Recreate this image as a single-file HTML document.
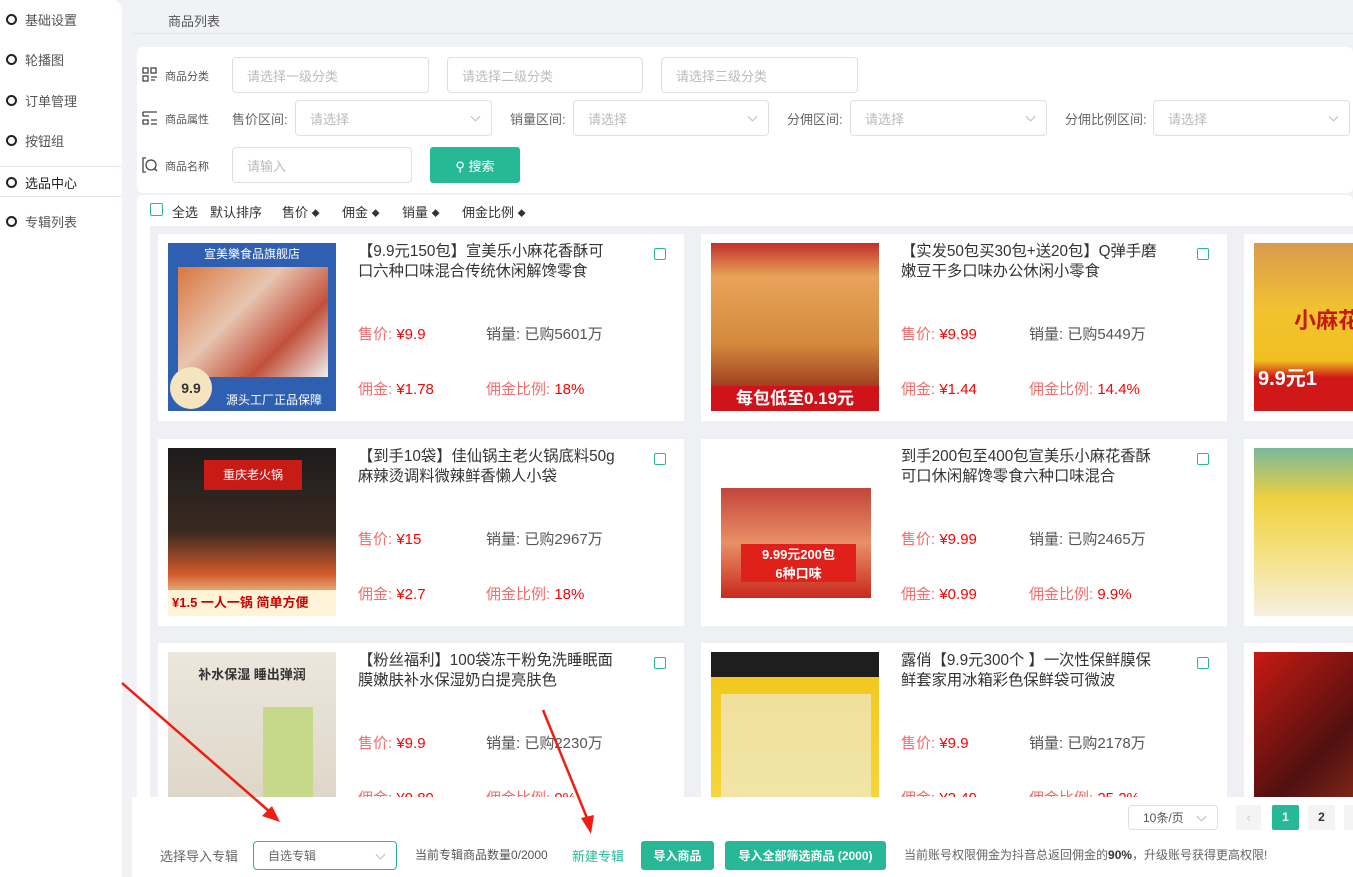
<!DOCTYPE html>
<html><head><meta charset="utf-8"><style>
*{margin:0;padding:0;box-sizing:border-box}
body{width:1353px;height:877px;overflow:hidden;background:#f0f2f5;font-family:"Liberation Sans","Noto Sans CJK SC",sans-serif;font-size:13px;color:#333;position:relative}
.side{position:absolute;left:0;top:0;width:122px;height:877px;background:#fff;border-top-right-radius:10px}
.side div{position:absolute;left:6px;font-size:13px;color:#555;display:flex;align-items:center}
.side div i{width:11px;height:11px;border:2px solid #222;border-radius:50%;margin-right:8px}
.side hr{position:absolute;left:0;width:122px;border:0;border-top:1px solid #e4e6ea}
.abs{position:absolute}
.inp{position:absolute;border:1px solid #dcdfe6;border-radius:4px;background:#fff;color:#bbb;font-size:13px;padding-left:14px;display:flex;align-items:center}
.inp .ch{position:absolute;right:12px;top:50%;width:7px;height:7px;border-right:1px solid #bbb;border-bottom:1px solid #bbb;transform:translateY(-70%) rotate(45deg)}
.lbl{position:absolute;font-size:13px;color:#666}
.card{position:absolute;width:526px;height:187px;background:#fff}
.card .img{position:absolute;left:10px;top:9px;width:168px;height:168px;overflow:hidden}
.card .t{position:absolute;left:200px;top:8px;white-space:nowrap;font-size:15.3px;line-height:20px;color:#333}
.card .cb{position:absolute;left:496px;top:14px;width:12px;height:12px;border:1px solid #27b996;border-radius:2px}
.card .r{position:absolute;font-size:15px;color:#f00}
.card .r span{color:#f56c6c}
.card .g{position:absolute;font-size:15px;color:#555}
.sort{position:absolute;top:202px;font-size:13px;color:#333}
.arr{display:inline-block;font-size:8px;vertical-align:1px}
.btn{position:absolute;background:#27b996;color:#fff;border-radius:3px;font-size:12px;display:flex;align-items:center;justify-content:center;font-weight:bold}
</style></head><body>
<div class="side">
<div style="top:10px"><i></i>基础设置</div>
<div style="top:50px"><i></i>轮播图</div>
<div style="top:91px"><i></i>订单管理</div>
<div style="top:131px"><i></i>按钮组</div>
<hr style="top:166px">
<div style="top:173px;color:#222"><i></i>选品中心</div>
<hr style="top:196px">
<div style="top:212px"><i></i>专辑列表</div>
</div>
<div class="abs" style="left:168px;top:11px;font-size:13px;color:#555">商品列表</div>
<div class="abs" style="left:132px;top:33px;width:1221px;border-top:1px solid #e4e6ea"></div>
<div class="abs" style="left:137px;top:47px;width:1216px;height:146px;background:#fff;border-radius:6px"></div>
<svg class="abs" style="left:142px;top:67px" width="16" height="16" viewBox="0 0 16 16" fill="none" stroke="#444" stroke-width="1.3"><rect x="1" y="1" width="5" height="5"/><rect x="1" y="9" width="5" height="5"/><rect x="9" y="1" width="5" height="5"/><path d="M9 10h6M9 13h4"/></svg>
<div class="lbl" style="left:165px;top:68px;font-size:11px;color:#555">商品分类</div>
<div class="inp" style="left:232px;top:57px;width:197px;height:36px">请选择一级分类</div>
<div class="inp" style="left:447px;top:57px;width:196px;height:36px">请选择二级分类</div>
<div class="inp" style="left:661px;top:57px;width:197px;height:36px">请选择三级分类</div>
<svg class="abs" style="left:142px;top:110px" width="16" height="16" viewBox="0 0 16 16" fill="none" stroke="#444" stroke-width="1.3"><path d="M1 2h14M1 6h6M1 10h5v4H1zM9 10h6M9 14h6M1 2v4"/></svg>
<div class="lbl" style="left:165px;top:111px;font-size:11px;color:#555">商品属性</div>
<div class="lbl" style="left:232px;top:109px">售价区间:</div>
<div class="inp" style="left:295px;top:100px;width:197px;height:36px">请选择<i class="ch"></i></div>
<div class="lbl" style="left:510px;top:109px">销量区间:</div>
<div class="inp" style="left:573px;top:100px;width:196px;height:36px">请选择<i class="ch"></i></div>
<div class="lbl" style="left:787px;top:109px">分佣区间:</div>
<div class="inp" style="left:850px;top:100px;width:197px;height:36px">请选择<i class="ch"></i></div>
<div class="lbl" style="left:1065px;top:109px">分佣比例区间:</div>
<div class="inp" style="left:1153px;top:100px;width:197px;height:36px">请选择<i class="ch"></i></div>
<svg class="abs" style="left:142px;top:157px" width="16" height="16" viewBox="0 0 16 16" fill="none" stroke="#444" stroke-width="1.3"><path d="M4 1H1v14h3"/><circle cx="9" cy="8" r="5"/><path d="M12 11l3 3"/></svg>
<div class="lbl" style="left:165px;top:158px;font-size:11px;color:#555">商品名称</div>
<div class="inp" style="left:232px;top:147px;width:180px;height:36px">请输入</div>
<div class="btn" style="left:430px;top:147px;width:90px;height:36px;font-size:13px;font-weight:normal">⚲ 搜索</div>
<div class="abs" style="left:137px;top:195px;width:1216px;height:682px;background:#fff;border-radius:6px"></div>
<div class="abs" style="left:150px;top:203px;width:13px;height:13px;border:1px solid #27b996;border-radius:2px"></div>
<div class="sort" style="left:172px">全选</div>
<div class="sort" style="left:210px">默认排序</div>
<div class="sort" style="left:282px">售价 <span class="arr">◆</span></div>
<div class="sort" style="left:342px">佣金 <span class="arr">◆</span></div>
<div class="sort" style="left:402px">销量 <span class="arr">◆</span></div>
<div class="sort" style="left:462px">佣金比例 <span class="arr">◆</span></div>
<div class="abs" style="left:150px;top:226px;width:1203px;height:651px;background:#eef0f4"></div>

<!-- row1 -->
<div class="card" style="left:158px;top:234px">
<div class="img" style="background:#2f5fb0"><div style="position:absolute;left:10px;top:24px;width:150px;height:110px;background:linear-gradient(135deg,#d9763f,#e8c5b0 40%,#c0503a 70%,#eee)"></div><div style="position:absolute;top:2px;width:100%;text-align:center;color:#fff;font-size:12px">宣美樂食品旗舰店</div><div style="position:absolute;bottom:3px;right:14px;color:#fff;font-size:12px">源头工厂正品保障</div><div style="position:absolute;left:2px;bottom:2px;width:42px;height:42px;border-radius:50%;background:#f4e4c0;font-size:14px;font-weight:bold;text-align:center;line-height:42px">9.9</div></div>
<div class="t">【9.9元150包】宣美乐小麻花香酥可<br>口六种口味混合传统休闲解馋零食</div><div class="cb"></div>
<div class="r" style="left:200px;top:89px"><span>售价:</span> ¥9.9</div><div class="g" style="left:328px;top:89px">销量: 已购5601万</div>
<div class="r" style="left:200px;top:144px"><span>佣金:</span> ¥1.78</div><div class="r" style="left:328px;top:144px"><span>佣金比例:</span> 18%</div></div>
<div class="card" style="left:701px;top:234px">
<div class="img" style="background:linear-gradient(#c0302a,#e8a35a 20%,#d48a3c 60%,#a04020 85%,#d0121a 85%)"><div style="position:absolute;bottom:2px;width:100%;text-align:center;color:#fff;font-size:17px;font-weight:bold">每包低至0.19元</div></div>
<div class="t">【实发50包买30包+送20包】Q弹手磨<br>嫩豆干多口味办公休闲小零食</div><div class="cb"></div>
<div class="r" style="left:200px;top:89px"><span>售价:</span> ¥9.99</div><div class="g" style="left:328px;top:89px">销量: 已购5449万</div>
<div class="r" style="left:200px;top:144px"><span>佣金:</span> ¥1.44</div><div class="r" style="left:328px;top:144px"><span>佣金比例:</span> 14.4%</div></div>
<div class="card" style="left:1244px;top:234px">
<div class="img" style="background:linear-gradient(#d99a50,#f2c230 40%,#f0c020 70%,#d01818 80%)"><div style="position:absolute;left:40px;top:60px;color:#c41a12;font-size:22px;font-weight:bold">小麻花</div><div style="position:absolute;left:4px;bottom:20px;color:#fff;font-size:20px;font-weight:bold">9.9元1</div></div></div>
<!-- row2 -->
<div class="card" style="left:158px;top:439px">
<div class="img" style="background:linear-gradient(#1c1c1c,#3a2a20 50%,#d45a2a 75%,#f0d0a0 90%)"><div style="position:absolute;left:36px;top:12px;width:98px;height:30px;background:#c91b16;color:#fff;font-size:12px;text-align:center;line-height:30px">重庆老火锅</div><div style="position:absolute;left:0;bottom:0;width:100%;height:26px;background:#fff3d8;color:#c00;font-size:13px;font-weight:bold;padding-left:4px;line-height:26px">¥1.5 一人一锅 简单方便</div></div>
<div class="t">【到手10袋】佳仙锅主老火锅底料50g<br>麻辣烫调料微辣鲜香懒人小袋</div><div class="cb"></div>
<div class="r" style="left:200px;top:89px"><span>售价:</span> ¥15</div><div class="g" style="left:328px;top:89px">销量: 已购2967万</div>
<div class="r" style="left:200px;top:144px"><span>佣金:</span> ¥2.7</div><div class="r" style="left:328px;top:144px"><span>佣金比例:</span> 18%</div></div>
<div class="card" style="left:701px;top:439px">
<div class="img" style="background:#fff"><div style="position:absolute;left:10px;top:40px;width:150px;height:110px;background:linear-gradient(#c4453a,#e89066 50%,#c9281e)"></div><div style="position:absolute;left:30px;top:96px;width:115px;background:#e0201a;color:#fff;font-size:13px;font-weight:bold;text-align:center">9.99元200包<br>6种口味</div></div>
<div class="t">到手200包至400包宣美乐小麻花香酥<br>可口休闲解馋零食六种口味混合</div><div class="cb"></div>
<div class="r" style="left:200px;top:89px"><span>售价:</span> ¥9.99</div><div class="g" style="left:328px;top:89px">销量: 已购2465万</div>
<div class="r" style="left:200px;top:144px"><span>佣金:</span> ¥0.99</div><div class="r" style="left:328px;top:144px"><span>佣金比例:</span> 9.9%</div></div>
<div class="card" style="left:1244px;top:439px">
<div class="img" style="background:linear-gradient(#7ab89c,#f0d040 30%,#f5e07a 60%,#f6f0e0)"></div></div>
<!-- row3 -->
<div class="card" style="left:158px;top:643px">
<div class="img" style="background:linear-gradient(#ece6dc,#dcd5c6)"><div style="position:absolute;top:12px;width:100%;text-align:center;font-size:13px;font-weight:bold;color:#333">补水保湿 睡出弹润</div><div style="position:absolute;left:95px;top:55px;width:50px;height:100px;background:#c6d98a"></div></div>
<div class="t">【粉丝福利】100袋冻干粉免洗睡眠面<br>膜嫩肤补水保湿奶白提亮肤色</div><div class="cb"></div>
<div class="r" style="left:200px;top:89px"><span>售价:</span> ¥9.9</div><div class="g" style="left:328px;top:89px">销量: 已购2230万</div>
<div class="r" style="left:200px;top:144px"><span>佣金:</span> ¥0.89</div><div class="r" style="left:328px;top:144px"><span>佣金比例:</span> 9%</div></div>
<div class="card" style="left:701px;top:643px">
<div class="img" style="background:linear-gradient(#1e1e1e 15%,#f2c81e 15%,#f6d840)"><div style="position:absolute;left:10px;top:42px;width:150px;height:110px;background:#eee;opacity:.6"></div></div>
<div class="t">露俏【9.9元300个 】一次性保鲜膜保<br>鲜套家用冰箱彩色保鲜袋可微波</div><div class="cb"></div>
<div class="r" style="left:200px;top:89px"><span>售价:</span> ¥9.9</div><div class="g" style="left:328px;top:89px">销量: 已购2178万</div>
<div class="r" style="left:200px;top:144px"><span>佣金:</span> ¥2.49</div><div class="r" style="left:328px;top:144px"><span>佣金比例:</span> 25.2%</div></div>
<div class="card" style="left:1244px;top:643px">
<div class="img" style="background:linear-gradient(135deg,#c81a12,#501010 50%,#b04020)"></div></div>

<!-- bottom bar -->
<div class="abs" style="left:132px;top:797px;width:1221px;height:80px;background:#fff"></div>
<div class="inp" style="left:1128px;top:805px;width:90px;height:25px;color:#555;font-size:12px">10条/页<i class="ch"></i></div>
<div class="abs" style="left:1236px;top:805px;width:25px;height:25px;background:#f4f4f5;color:#ccc;text-align:center;line-height:25px">‹</div>
<div class="abs" style="left:1272px;top:805px;width:27px;height:25px;background:#27b996;color:#fff;text-align:center;line-height:25px;font-weight:bold;font-size:12px;border-radius:2px">1</div>
<div class="abs" style="left:1308px;top:805px;width:27px;height:25px;background:#f4f4f5;color:#333;text-align:center;line-height:25px;font-weight:bold;font-size:12px">2</div>
<div class="abs" style="left:1344px;top:805px;width:20px;height:25px;background:#f4f4f5"></div>
<div class="lbl" style="left:160px;top:846px">选择导入专辑</div>
<div class="inp" style="left:253px;top:841px;width:144px;height:29px;border-color:#27b996;color:#666;font-size:12px">自选专辑<i class="ch"></i></div>
<div class="lbl" style="left:415px;top:846px;font-size:12px;color:#555">当前专辑商品数量0/2000</div>
<div class="lbl" style="left:572px;top:846px;color:#27b996">新建专辑</div>
<div class="btn" style="left:641px;top:841px;width:73px;height:29px">导入商品</div>
<div class="btn" style="left:725px;top:841px;width:161px;height:29px">导入全部筛选商品 (2000)</div>
<div class="lbl" style="left:904px;top:846px;font-size:12px">当前账号权限佣金为抖音总返回佣金的<b style="color:#333">90%</b>，升级账号获得更高权限!</div>

<svg class="abs" style="left:0;top:0" width="1353" height="877">
<g stroke="#f01d12" stroke-width="2.5" fill="#f01d12"><line x1="122" y1="683" x2="270" y2="812"/><polygon points="280,822 262,816 272,806" stroke="none"/><line x1="543" y1="710" x2="587" y2="818"/><polygon points="591,834 581,818 594,815" stroke="none"/></g>
</svg>
</body></html>
